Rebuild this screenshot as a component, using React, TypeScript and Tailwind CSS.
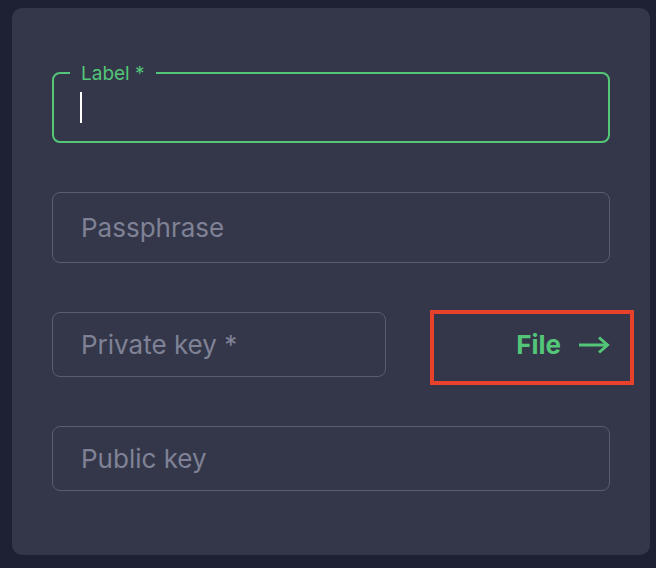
function ArrowRight() {
  return (
    <svg width="32" height="18" viewBox="0 0 32 18" fill="none" stroke="currentColor" strokeWidth="3" strokeLinejoin="miter">
      <path d="M1 9H29.5" />
      <path d="M21 1.5L29.5 9L21 16.5" />
    </svg>
  );
}

function Placeholder({ text }: { text: string }) {
  return <span className="text-[26px] leading-none text-[#7f8296]">{text}</span>;
}

export default function App() {
  return (
    <div className="min-h-screen bg-[#1e2033] pl-[12px] pr-[6px] pt-[8px] pb-[13px] font-['Inter',sans-serif]">
      <div className="flex flex-col gap-[49px] rounded-[10px] bg-[#343749] px-[40px] py-[64px]">
        {/* focused label field */}
        <div className="relative flex h-[71px] items-center rounded-[8px] border-2 border-[#53c678] pl-[26px]">
          <span className="absolute left-[16px] top-[-1px] -translate-y-1/2 bg-[#343749] px-[11px] text-[19px] leading-none text-[#53c678]">
            Label *
          </span>
          <span className="h-[31px] w-[2px] bg-white" />
        </div>

        <div className="flex h-[71px] items-center rounded-[8px] border border-[#5a5d70] pl-[28px]">
          <Placeholder text="Passphrase" />
        </div>

        <div className="flex h-[65px]">
          <div className="flex h-[65px] w-[334px] items-center rounded-[8px] border border-[#5a5d70] pl-[28px]">
            <Placeholder text="Private key *" />
          </div>
          <button className="-mr-[24px] -mt-[2px] ml-auto flex h-[75px] w-[204px] items-center justify-end gap-[17px] border-4 border-[#e8412c] pb-[5px] pr-[20px] text-[#53c678]">
            <span className="text-[26px] font-bold leading-none">File</span>
            <ArrowRight />
          </button>
        </div>

        <div className="flex h-[65px] items-center rounded-[8px] border border-[#5a5d70] pl-[28px]">
          <Placeholder text="Public key" />
        </div>
      </div>
    </div>
  );
}
